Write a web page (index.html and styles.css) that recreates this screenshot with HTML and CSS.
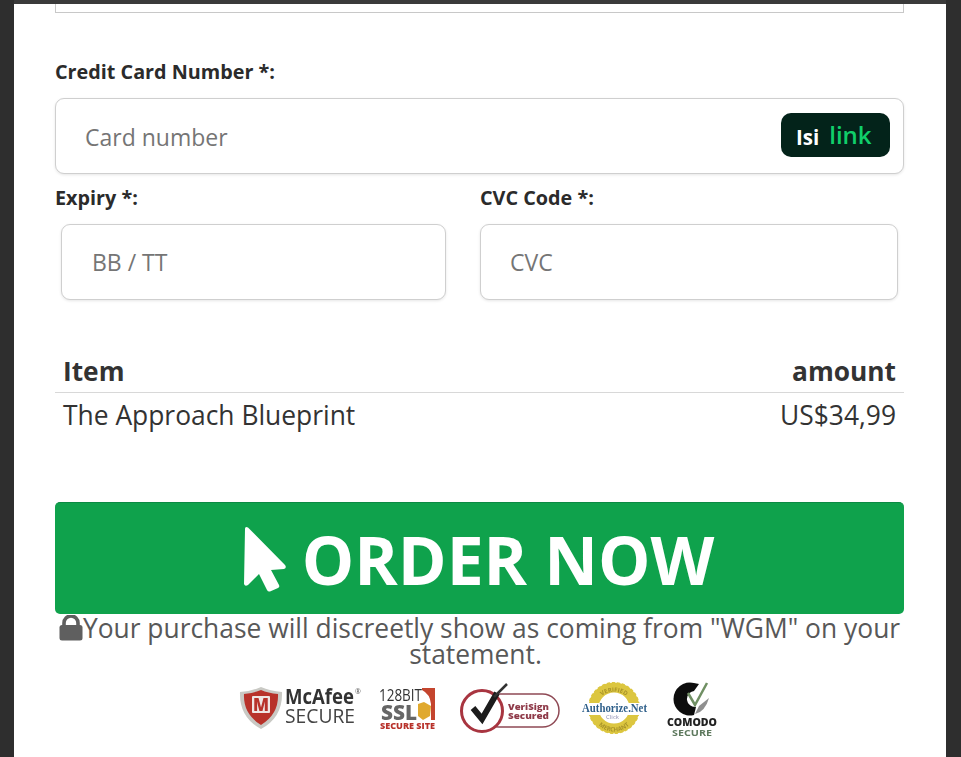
FILE: index.html
```html
<!DOCTYPE html>
<html lang="en">
<head>
<meta charset="utf-8">
<title>Checkout</title>
<link rel="stylesheet" href="styles.css">
</head>
<body>
<main class="panel">
  <div class="top-box"></div>
  <label class="label label-card">Credit Card Number *:</label>
  <div class="field field-card">
    <span class="placeholder placeholder-card">Card number</span>
    <span class="isilink"><span class="isi">Isi</span><span class="link">link</span></span>
  </div>
  <div class="split">
    <div class="col col-exp">
      <label class="label label-exp">Expiry *:</label>
      <div class="field field-exp"><span class="placeholder">BB / TT</span></div>
    </div>
    <div class="col col-cvc">
      <label class="label">CVC Code *:</label>
      <div class="field field-cvc"><span class="placeholder">CVC</span></div>
    </div>
  </div>
  <div class="summary">
    <div class="row row-head"><span>Item</span><span>amount</span></div>
    <div class="row row-item"><span>The Approach Blueprint</span><span>US$34,99</span></div>
  </div>
  <button class="order" type="button">
    <svg class="cursor" viewBox="0 0 44 66" width="44" height="66" aria-hidden="true">
      <path d="M2 3 Q2 0 5 1.500 L42 39 Q44 42 41 43 L28 44 L36 59 Q37 61 35 62 L27 65.500 Q25 66 24 64 L16 48 L5 59 Q2 61 1 58 Z" fill="#fff"/>
    </svg>
    <span>ORDER NOW</span>
  </button>
  <p class="notice">
    <svg class="lock" viewBox="0 0 24 26" width="24" height="26" aria-hidden="true">
      <path d="M5 11V8a7 7 0 0 1 14 0v3" fill="none" stroke="#5f5f5f" stroke-width="3.600"/>
      <rect x="0.500" y="10" width="23" height="15.500" rx="2.500" fill="#5f5f5f"/>
    </svg>Your purchase will discreetly show as coming from "WGM" on your statement.<span class="tail"></span>
  </p>
  <div class="badges">
    <svg class="strip" width="490" height="60" viewBox="235 682 490 60">
      <defs>
        <filter id="soft" x="-5%" y="-5%" width="110%" height="110%"><feGaussianBlur stdDeviation="0.350"/></filter>
        <path id="arcTop" d="M596 703A20 20 0 0 1 632 703"/>
        <path id="arcBot" d="M594 718A21.500 21.500 0 0 0 634 718"/>
      </defs>
      <g filter="url(#soft)">
        <!-- McAfee -->
        <path d="M240 692Q252 691 261 687Q270 691 282 692Q283 717 261 729Q239 717 240 692Z" fill="#c9c9c4"/>
        <path d="M244 694Q254 693 261 690Q268 693 278 694Q279 714 261 725Q243 714 244 694Z" fill="#b8322c"/>
        <rect x="252" y="696" width="18" height="17" rx="1" fill="#efe6e4"/>
        <text class="t-m" x="261" y="711" textLength="16" lengthAdjust="spacingAndGlyphs">M</text>
        <text class="t-mcafee" x="285" y="704" textLength="69" lengthAdjust="spacingAndGlyphs">McAfee</text>
        <text class="t-reg" x="355" y="694">®</text>
        <text class="t-secure" x="285" y="723" textLength="70" lengthAdjust="spacingAndGlyphs">SECURE</text>

        <!-- 128 bit SSL -->
        <path d="M422 688H435V720H431V704Q430 694 422 690Z" fill="#c4452f"/>
        <path d="M418 704L424 702L431 706L430 716L423 720L418 716Z" fill="#e0a92f"/>
        <text class="t-128" x="379" y="701" textLength="43" lengthAdjust="spacingAndGlyphs">128BIT</text>
        <text class="t-ssl" x="381" y="720" textLength="36" lengthAdjust="spacingAndGlyphs">SSL</text>
        <text class="t-site" x="380" y="729" textLength="55" lengthAdjust="spacingAndGlyphs">SECURE SITE</text>

        <!-- VeriSign -->
        <rect x="482" y="694" width="77" height="33" rx="16.500" fill="#fff" stroke="#8f4a55" stroke-width="1.500"/>
        <circle cx="482" cy="711" r="20.500" fill="#fff" stroke="#a8343f" stroke-width="3"/>
        <path d="M473 708L482 719L497 693" fill="none" stroke="#1c1c1c" stroke-width="6"/>
        <path d="M494 697L507 684" stroke="#333" stroke-width="2.500"/>
        <text class="t-veri" x="508" y="710" textLength="41" lengthAdjust="spacingAndGlyphs">VeriSign</text>
        <text class="t-veri" x="508" y="719" textLength="41" lengthAdjust="spacingAndGlyphs">Secured</text>

        <!-- Authorize.Net -->
        <circle cx="614" cy="708" r="20.500" fill="none" stroke="#dcc63f" stroke-width="10"/>
        <circle cx="614" cy="708" r="25" fill="none" stroke="#dcc63f" stroke-width="2" stroke-dasharray="3 2"/>
        <rect x="580" y="703" width="70" height="12" fill="#fff"/>
        <text class="t-arc"><textPath href="#arcTop" startOffset="50%">VERIFIED</textPath></text>
        <text class="t-arc"><textPath href="#arcBot" startOffset="50%">MERCHANT</textPath></text>
        <text class="t-auth" x="614.500" y="712" textLength="65" lengthAdjust="spacingAndGlyphs">Authorize.Net</text>
        <text class="t-click" x="612.500" y="719">Click</text>

        <!-- Comodo -->
        <path d="M694 683A16.500 16.500 0 1 0 694 715L696 707A8 8 0 1 1 694 691L699 684Z" fill="#111"/>
        <path d="M688 693L695 705L707 683" fill="none" stroke="#6f8f63" stroke-width="2.500"/>
        <path d="M695 714Q705 712 709 698L699 706Z" fill="#8f8f8f"/>
        <text class="t-comodo" x="692" y="726" textLength="50" lengthAdjust="spacingAndGlyphs">COMODO</text>
        <text class="t-csec" x="692" y="736" textLength="40" lengthAdjust="spacingAndGlyphs">SECURE</text>
      </g>
    </svg>
  </div>
</main>
</body>
</html>
```
FILE: styles.css
```css
* { box-sizing: border-box; }
html, body { margin: 0; height: 757px; overflow: hidden; }
body {
  background: #2e2e2e;
  font-family: "Open Sans", "Liberation Sans", sans-serif;
  color: #2b2b2b;
  padding: 4px 15px 0 14px;
}
.panel {
  background: #fff;
  height: 753px;
  padding: 0 42px 0 41px;
  box-shadow: 0 -4px 0 #3a3a3a;
}
.top-box {
  height: 9px;
  border: 1px solid #c8c8c8;
  border-top: 0;
}
.label {
  display: block;
  font-size: 19.800px;
  font-weight: 700;
  line-height: 27px;
}
.label-card { margin-top: 45px; margin-bottom: 13px; }
.field {
  display: flex;
  align-items: center;
  justify-content: space-between;
  height: 76px;
  background: #fff;
  border: 1px solid #cfcfcf;
  border-radius: 9px;
  box-shadow: 0 1px 3px rgba(0, 0, 0, .1);
  padding: 0 13px 0 29px;
}
.placeholder { font-size: 23px; color: #757575; line-height: 32px; }
.placeholder-card { padding-top: 2px; }
.field-exp { padding-left: 30px; }
.field-cvc { padding-left: 29px; }
.isilink {
  display: flex;
  align-items: center;
  gap: 10px;
  width: 109px;
  height: 44px;
  margin-top: -2px;
  padding: 0 0 0 15px;
  background: #03231a;
  border-radius: 10px;
}
.isi { color: #fff; font-size: 20.500px; font-weight: 700; line-height: 44px; padding-top: 3px; }
.link { color: #10cf6a; font-size: 24px; font-weight: 600; line-height: 44px; margin-top: -1px; }
.split { display: flex; margin-top: 10px; }
.col-exp { width: 425px; }
.col-cvc { width: 424px; }
.col .label { margin-bottom: 13px; }
.field-exp { margin-left: 6px; width: 385px; }
.field-cvc { width: 418px; }
.summary { margin-top: 53px; }
.row {
  display: flex;
  justify-content: space-between;
  font-size: 26.400px;
  line-height: 34px;
  padding: 5px 8px 1px;
  color: #333;
}
.row-head {
  padding: 1px 8px 4px;
  font-weight: 700;
  font-size: 26.300px;
  border-bottom: 1px solid #d8d8d8;
}
.order {
  display: flex;
  align-items: center;
  justify-content: center;
  gap: 15px;
  width: 849px;
  height: 112px;
  margin: 69px 0 0;
  padding: 0 2px 0 0;
  border: 0;
  border-top: 1px solid #0b8a43;
  border-radius: 5px;
  background: #0fa24c;
  color: #fff;
  font-family: inherit;
  font-size: 66px;
  font-weight: 700;
}
.notice {
  margin: 1px 0 0;
  text-align: center;
  font-size: 26.400px;
  line-height: 26px;
  color: #585858;
}
.lock { vertical-align: -3px; }
.tail { display: inline-block; width: 8px; }
.badges { margin-top: 15px; padding-left: 180px; }
.strip { display: block; }
.strip text { font-family: "Open Sans", "Liberation Sans", sans-serif; }
.t-m { font-size: 17px; font-weight: 800; fill: #b8322c; text-anchor: middle; }
.t-mcafee { font-size: 21px; font-weight: 700; fill: #333; }
.t-reg { font-size: 7px; fill: #555; }
.t-secure { font-size: 20px; fill: #444; }
.t-128 { font-size: 17px; fill: #333; }
.t-ssl { font-size: 21px; font-weight: 800; fill: #666; }
.t-site { font-size: 8.500px; font-weight: 800; fill: #b8322c; }
.t-veri { font-size: 8.500px; font-weight: 800; fill: #8f3a4a; }
.strip .t-auth { font-family: "Liberation Serif", serif; font-size: 12.500px; font-weight: 700; fill: #2e5f8a; text-anchor: middle; }
.t-click { font-size: 6px; fill: #8a8ab0; text-anchor: middle; }
.t-arc { font-size: 6px; font-weight: 700; fill: #a8932a; text-anchor: middle; }
.t-comodo { font-size: 10px; font-weight: 800; fill: #222; text-anchor: middle; }
.t-csec { font-size: 9.500px; font-weight: 700; fill: #5f7a5f; text-anchor: middle; }
```
